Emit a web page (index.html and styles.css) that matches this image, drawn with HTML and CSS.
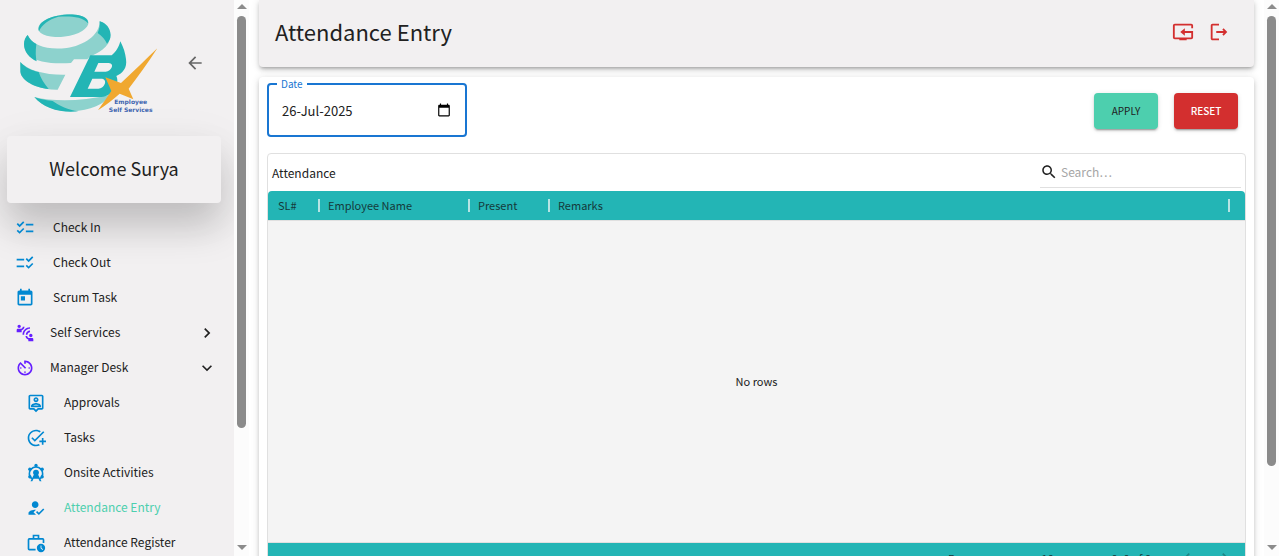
FILE: index.html
```html
<!DOCTYPE html>
<html lang="en">
<head>
<meta charset="utf-8">
<title>Attendance Entry</title>
<link rel="stylesheet" href="styles.css">
</head>
<body>
<div class="app">
  <aside class="sidebar">
    <div class="brand">
      <svg class="logo" viewBox="60 39 420 303" role="img" aria-label="TBx Employee Self Services">
        <g fill="#8dd2cd">
          <ellipse cx="190" cy="77" rx="76" ry="33" transform="rotate(-8 190 77)"/>
          <path d="M83 105C100 140 145 150 200 144C250 138 300 105 299 64C325 72 336 105 325 130C305 160 270 166 262 178H222L213 189C165 192 110 190 82 162C68 142 71 120 83 105Z"/>
          <path d="M61 186C85 212 135 225 196 224L173 269C130 270 80 255 63 225Z"/>
          <path d="M103 291C160 305 240 305 330 285C310 320 250 336 200 334C160 330 125 318 103 291Z"/>
        </g>
        <g fill="#23b5b5">
          <path d="M117 94C108 60 170 40 225 44C250 46 266 55 264 70C248 48 205 48 175 50C145 58 125 75 117 94Z"/>
          <path d="M83 105C88 117 97 126 109 132C106 155 107 172 110 184C88 175 72 155 72 133C72 120 76 112 83 105Z"/>
          <path d="M299 64C318 69 331 84 332 105C332 116 328 124 321 131C315 119 307 109 293 99C298 88 300 76 299 64Z"/>
          <path d="M61 186C75 202 95 212 116 216C122 235 133 252 146 267C105 263 66 243 61 216Z"/>
          <path d="M103 291C125 299 145 302 158 303C178 318 205 330 235 334C180 339 132 326 103 291Z"/>
          <path d="M210 291L271 166H335C349 155 356 142 361 124C371 143 376 160 378 177C382 205 368 219 349 228C360 251 341 287 305 291Z"/>
        </g>
        <path fill="#f2f0f1" d="M295 189H326C345 190 335 214 317 215H283ZM277 236H306C324 239 314 265 295 266H263Z"/>
        <path fill="#f0a830" d="M316 232L363 249C402 213 438 178 472 145C445 187 415 228 386 266L400 298L359 281C338 299 317 316 294 331C309 309 322 291 334 273Z"/>
        <g class="logo-text" text-anchor="middle"><text x="392" y="311">Employee</text><text x="392" y="336">Self Services</text></g>
      </svg>
      <button class="icon-button back" aria-label="Collapse menu"><svg viewBox="0 0 24 24"><path d="M20 11H7.83l5.59-5.59L12 4l-8 8 8 8 1.41-1.41L7.83 13H20z"/></svg></button>
    </div>
    <div class="welcome">Welcome Surya</div>
    <nav class="menu">
      <a href="#" class="item direct"><svg viewBox="0 0 24 24"><path d="M22 7h-9v2h9V7zm0 8h-9v2h9v-2zM5.54 11 2 7.46l1.41-1.41 2.12 2.12 4.24-4.24 1.41 1.41L5.54 11zm0 8L2 15.46l1.41-1.41 2.12 2.12 4.24-4.24 1.41 1.41L5.54 19z"/></svg><span>Check In</span></a>
      <a href="#" class="item direct"><svg viewBox="0 0 24 24"><path d="M11 7H2v2h9V7zm0 8H2v2h9v-2zm5.34-4-3.54-3.54 1.41-1.41 2.12 2.12 4.24-4.24L22 5.34 16.34 11zm0 8-3.54-3.54 1.41-1.41 2.12 2.12 4.24-4.24L22 13.34 16.34 19z"/></svg><span>Check Out</span></a>
      <a href="#" class="item direct"><svg viewBox="0 0 24 24"><path d="M19 3h-1V1h-2v2H8V1H6v2H5c-1.11 0-1.99.9-1.99 2L3 19c0 1.1.89 2 2 2h14c1.1 0 2-.9 2-2V5c0-1.1-.9-2-2-2zm0 16H5V8h14v11zM7 10h5v5H7z"/></svg><span>Scrum Task</span></a>
      <a href="#" class="item group"><svg viewBox="0 0 24 24"><path d="M11 14H9c0-4.97 4.03-9 9-9v2c-3.87 0-7 3.13-7 7zm7-3V9c-2.76 0-5 2.24-5 5h2c0-1.66 1.34-3 3-3zM7 4c0-1.11-.89-2-2-2s-2 .89-2 2 .89 2 2 2 2-.89 2-2zm4.45.5h-2C9.21 5.92 7.99 7 6.5 7h-3C2.67 7 2 7.67 2 8.5V11h6V8.74c1.86-.59 3.25-2.23 3.45-4.24zM19 17c1.11 0 2-.89 2-2s-.89-2-2-2-2 .89-2 2 .89 2 2 2zm1.5 1h-3c-1.49 0-2.71-1.08-2.95-2.5h-2c.2 2.01 1.59 3.65 3.45 4.24V22h6v-2.5c0-.83-.67-1.5-1.5-1.5z"/></svg><span>Self Services</span><svg class="chevron" viewBox="0 0 24 24"><path d="M8.59 16.59 13.17 12 8.59 7.41 10 6l6 6-6 6z"/></svg></a>
      <a href="#" class="item group"><svg viewBox="0 0 24 24"><path d="M11 17c0 .55.45 1 1 1s1-.45 1-1-.45-1-1-1-1 .45-1 1zm0-14v4h2V5.08c3.39.49 6 3.39 6 6.92 0 3.87-3.13 7-7 7s-7-3.13-7-7c0-1.68.59-3.22 1.58-4.42L12 13l1.41-1.41-6.8-6.8v.02C4.42 6.45 3 9.05 3 12c0 4.97 4.02 9 9 9 4.97 0 9-4.03 9-9s-4.03-9-9-9h-1zm7 9c0-.55-.45-1-1-1s-1 .45-1 1 .45 1 1 1 1-.45 1-1zM6 12c0 .55.45 1 1 1s1-.45 1-1-.45-1-1-1-1 .45-1 1z"/></svg><span>Manager Desk</span><svg class="chevron" viewBox="0 0 24 24"><path d="M7.41 8.59 12 13.17l4.59-4.58L18 10l-6 6-6-6z"/></svg></a>
      <a href="#" class="item child"><svg viewBox="0 0 24 24"><path d="M19 2H5c-1.11 0-2 .9-2 2v14c0 1.1.89 2 2 2h4l3 3 3-3h4c1.1 0 2-.9 2-2V4c0-1.1-.9-2-2-2zm0 16h-4.83l-.59.59L12 20.17l-1.59-1.59-.58-.58H5V4h14v14zm-7-7c1.65 0 3-1.35 3-3s-1.35-3-3-3-3 1.35-3 3 1.35 3 3 3zm0-4c.55 0 1 .45 1 1s-.45 1-1 1-1-.45-1-1 .45-1 1-1zm6 8.58c0-2.5-3.97-3.58-6-3.58s-6 1.08-6 3.58V17h12v-1.42zM8.48 15c.74-.51 2.23-1 3.52-1 1.3 0 2.78.49 3.52 1H8.48z"/></svg><span>Approvals</span></a>
      <a href="#" class="item child"><svg viewBox="0 0 24 24"><path d="M22 5.18 10.59 16.6l-4.24-4.24 1.41-1.41 2.83 2.83 10-10L22 5.18zM12 20c-4.42 0-8-3.58-8-8s3.58-8 8-8c1.57 0 3.04.46 4.28 1.25l1.45-1.45C16.1 2.67 14.13 2 12 2 6.48 2 2 6.48 2 12s4.48 10 10 10c1.73 0 3.36-.44 4.78-1.22l-1.5-1.5c-1 .46-2.11.72-3.28.72zm7-5h-3v2h3v3h2v-3h3v-2h-3v-3h-2v3z"/></svg><span>Tasks</span></a>
      <a href="#" class="item child"><svg viewBox="0 0 24 24"><path fill="none" stroke="currentColor" stroke-width="2" d="M7 19A8 8 0 1 1 17 19"/><circle cx="12" cy="3" r="2"/><circle cx="4.6" cy="7.5" r="2"/><circle cx="19.4" cy="7.5" r="2"/><circle cx="4.6" cy="16.5" r="2"/><circle cx="19.4" cy="16.5" r="2"/><circle cx="12" cy="11.5" r="3.500"/><path d="M10 13h4L18.600 22H16.400L15 19H9L7.600 22H5.400z"/></svg><span>Onsite Activities</span></a>
      <a href="#" class="item child active"><svg viewBox="0 0 24 24"><path d="M9 17l3-2.94c-.39-.04-.68-.06-1-.06-2.67 0-8 1.34-8 4v2h9l-3-3zm2-5c2.21 0 4-1.79 4-4s-1.79-4-4-4-4 1.79-4 4 1.79 4 4 4zm4.47 8.5L12 17l1.4-1.41 2.07 2.08 5.13-5.17 1.4 1.41z"/></svg><span>Attendance Entry</span></a>
      <a href="#" class="item child"><svg viewBox="0 0 24 24"><path fill="none" stroke="currentColor" stroke-width="2" d="M11.500 20H4a1 1 0 0 1-1-1V8a1 1 0 0 1 1-1h16a1 1 0 0 1 1 1v4M9 7V3h6v4"/><path fill-rule="evenodd" d="M18 13a5 5 0 1 0 0 10 5 5 0 0 0 0-10zm-.5 2h1v2.800l2 2-.7.700-2.300-2.300z"/></svg><span>Attendance Register</span></a>
    </nav>
  </aside>
  <div class="scrollbar"><i class="up"></i><i class="thumb side-thumb"></i><i class="down"></i></div>

  <main class="main">
    <header class="topbar">
      <h1>Attendance Entry</h1>
      <button class="icon-button red" aria-label="Reset view"><svg viewBox="0 0 24 24"><path fill="none" stroke="currentColor" stroke-width="2" d="M22 8V5a1 1 0 0 0-1-1H3a1 1 0 0 0-1 1v13a1 1 0 0 0 1 1h18a1 1 0 0 0 1-1v-6H11"/><path d="M8 19h8v2H8zM9 12l5-4v8z"/></svg></button>
      <button class="icon-button red" aria-label="Log out"><svg viewBox="0 0 24 24"><path d="M17 8l-1.410 1.410L17.170 11H9v2h8.170l-1.580 1.580L17 16l4-4-4-4zM5 5h7V3H5c-1.100 0-2 .9-2 2v14c0 1.100.9 2 2 2h7v-2H5V5z"/></svg></button>
    </header>
    <section class="panel">
      <form class="filters">
        <fieldset class="date-field">
          <legend><label for="date">Date</label></legend>
          <input id="date" type="text" value="26-Jul-2025">
          <button type="button" class="calendar" aria-label="Open calendar"><svg viewBox="0 0 24 24"><path d="M20 3h-1V1h-2v2H7V1H5v2H4c-1.100 0-2 .9-2 2v16c0 1.100.9 2 2 2h16c1.100 0 2-.9 2-2V5c0-1.100-.9-2-2-2zm0 18H4V8h16v13z"/></svg></button>
        </fieldset>
        <button type="button" class="btn apply">APPLY</button>
        <button type="button" class="btn reset">RESET</button>
      </form>
      <div class="grid">
        <div class="toolbar">
          <span>Attendance</span>
          <label class="search" for="search"><svg viewBox="0 0 24 24"><path d="M15.500 14h-.79l-.28-.27C15.410 12.590 16 11.110 16 9.500 16 5.910 13.090 3 9.500 3S3 5.910 3 9.500 5.910 16 9.500 16c1.610 0 3.090-.59 4.230-1.570l.27.28v.79l5 4.990L20.490 19l-4.990-5zm-6 0C7.010 14 5 11.990 5 9.500S7.010 5 9.500 5 14 7.010 14 9.500 11.990 14 9.500 14z"/></svg><input id="search" type="text" placeholder="Search…" aria-label="Search"></label>
        </div>
        <table class="columns">
          <thead><tr><th class="c-sl">SL#</th><th class="c-name">Employee Name</th><th class="c-present">Present</th><th>Remarks</th><th class="c-end" aria-label="End"></th></tr></thead>
          <tbody><tr><td colspan="5">No rows</td></tr></tbody>
        </table>
        <div class="pager">
          <label for="size">Rows per page:</label>
          <span class="size"><select id="size"><option>10</option></select><i></i></span>
          <span class="range">0–0 of 0</span>
          <button class="page" aria-label="Previous page"><svg viewBox="0 0 24 24"><path d="M15.410 7.410 14 6l-6 6 6 6 1.410-1.410L10.830 12z"/></svg></button>
          <button class="page" aria-label="Next page"><svg viewBox="0 0 24 24"><path d="M8.590 16.590 13.170 12 8.590 7.410 10 6l6 6-6 6z"/></svg></button>
        </div>
      </div>
    </section>
  </main>
  <div class="scrollbar"><i class="up"></i><i class="thumb main-thumb"></i><i class="down"></i></div>
</div>
</body>
</html>
```

FILE: styles.css
```css
* { box-sizing: border-box; }
body {
  margin: 0;
  background: #fff;
  color: #212121;
  font: 12px/20px "Noto Sans CJK SC", "Noto Sans", sans-serif;
}
button, input, select { font: inherit; color: inherit; margin: 0; padding: 0; border: 0; background: none; outline: 0; }
svg { display: block; fill: currentColor; flex: none; }
.app { display: flex; height: 100vh; overflow: hidden; }

/* Sidebar */
.sidebar { width: 234px; flex: none; background: #f2f0f1; overflow: hidden; }
.brand { display: flex; align-items: center; justify-content: space-between; height: 136px; padding: 0 29px 10px 20px; }
.logo { width: 140px; height: 101px; }
.logo-text { fill: #3f66b0; font: 700 18px "DejaVu Sans", sans-serif; }
.icon-button { display: flex; cursor: pointer; }
.back { color: #666; }
.back svg { width: 20px; height: 20px; }
.welcome {
  margin: 0 13px 0 7px;
  padding: 17px 0 19px;
  border-radius: 4px;
  background: #f2f0f1;
  font-size: 18px;
  line-height: 31px;
  text-align: center;
  box-shadow: 0 24px 38px rgba(0,0,0,.18), 0 9px 46px 4px rgba(0,0,0,.05);
}
.menu { position: relative; padding-top: 7px; }
.item { display: flex; align-items: center; height: 35px; padding: 0 17px 0 15px; color: inherit; text-decoration: none; }
.item svg { width: 20px; height: 20px; color: #0288d1; }
.item span { flex: 1; padding-bottom: 2px; }
.direct { gap: 18px; }
.group { gap: 15px; }
.group svg { color: #651fff; }
.group .chevron { color: #212121; }
.child { padding-left: 26px; gap: 18px; }
.active span { color: #4dcfae; }

/* Scroll tracks */
.scrollbar { display: flex; flex-direction: column; align-items: center; width: 15px; flex: none; padding: 4px 0 6px; background: #fcfcfc; }
.up, .down { border: 5px solid transparent; width: 0; height: 0; }
.up { border-top: 0; border-bottom-color: #8b8b8b; }
.down { border-bottom: 0; border-top-color: #8b8b8b; margin-top: auto; }
.thumb { width: 9px; margin-top: 7px; border-radius: 5px; background: #8b8b8b; }
.side-thumb { height: 75.5%; }
.main-thumb { height: 82.5%; }

/* Main area */
.main { flex: 1; min-width: 0; padding: 0 10px; }
.topbar {
  display: flex;
  align-items: center;
  gap: 14px;
  height: 67px;
  padding: 0 24px 4px 16px;
  border-radius: 0 0 4px 4px;
  background: #f2f0f1;
  box-shadow: 0 3px 3px -2px rgba(0,0,0,.2), 0 3px 4px rgba(0,0,0,.14), 0 1px 8px rgba(0,0,0,.12);
}
h1 { flex: 1; margin: 0; padding-bottom: 2px; font-size: 22px; line-height: 32px; font-weight: 400; }
.red { color: #d32f2f; }
.red svg { width: 22px; height: 22px; }
.panel {
  margin-top: 10px;
  padding: 0 8px 16px;
  border-radius: 4px;
  background: #fff;
  box-shadow: 0 3px 3px -2px rgba(0,0,0,.2), 0 3px 4px rgba(0,0,0,.14), 0 1px 8px rgba(0,0,0,.12);
}
.filters { display: flex; align-items: center; gap: 16px; height: 76px; padding-right: 8px; }
.date-field {
  display: flex;
  align-items: center;
  width: 200px;
  height: 60px;
  min-width: 0;
  margin: 0 auto 16px 0;
  padding: 0 14px 6px 13px;
  border: 2px solid #1976d2;
  border-radius: 4px;
}
legend { margin-left: -5px; padding: 0 4px; color: #1976d2; font-size: 10px; line-height: 14px; }
legend label { display: block; }
.date-field input { flex: 1; min-width: 0; height: 32px; font-size: 13px; }
.calendar { color: #000; }
.calendar svg { width: 14px; height: 14px; }
.btn {
  width: 64px;
  height: 36px;
  margin-top: -8px;
  border-radius: 4px;
  font-size: 10px;
  cursor: pointer;
  box-shadow: 0 3px 1px -2px rgba(0,0,0,.2), 0 2px 2px rgba(0,0,0,.14), 0 1px 5px rgba(0,0,0,.12);
}
.apply { background: #4dcfae; }
.reset { background: #d32f2f; color: #fff; font-weight: 500; }

/* Data grid */
.grid { border: 1px solid #e0e0e0; border-radius: 4px; font-size: 11px; }
.toolbar { display: flex; align-items: center; justify-content: space-between; height: 37px; padding: 0 4px; font-size: 12px; }
.search { display: flex; align-items: center; gap: 3px; width: 201px; height: 30px; border-bottom: 1px solid #e0e0e0; }
.search svg { width: 18px; height: 18px; }
.search input { flex: 1; min-width: 0; }
.search input::placeholder { color: #a6a6a6; opacity: 1; }
.columns { width: 100%; border-collapse: separate; border-spacing: 0; table-layout: fixed; }
.columns th { position: relative; height: 29px; padding: 0 10px 2px; background: #23b5b5; text-align: left; font-weight: 400; color: #15393a; }
.columns th:first-child { border-top-left-radius: 4px; }
.columns th:last-child { border-top-right-radius: 4px; }
.columns th + th::before { content: ""; position: absolute; left: 0; top: 8px; width: 2px; height: 13px; background: #b7e4e4; }
.c-sl { width: 50px; }
.c-name { width: 150px; }
.c-present { width: 80px; }
.c-end { width: 17px; }
.columns .c-end { padding: 0; }
.columns td { height: 323px; padding: 0 0 2px; background: #f4f4f4; border-top: 1px solid #e0e0e0; border-bottom: 1px solid #e0e0e0; text-align: center; }
.pager { display: flex; align-items: center; justify-content: flex-end; height: 30px; padding-right: 10px; background: #23b5b5; color: #15393a; }
.size { display: flex; align-items: center; gap: 8px; margin: 0 38px 0 16px; }
.size select { appearance: none; width: 14px; }
.size i { border: 5px solid transparent; border-top-color: #1a7f80; border-bottom: 0; }
.page { margin-left: 18px; color: #1c8585; }
.page svg { width: 20px; height: 20px; }
.range { margin-right: 8px; }
```
